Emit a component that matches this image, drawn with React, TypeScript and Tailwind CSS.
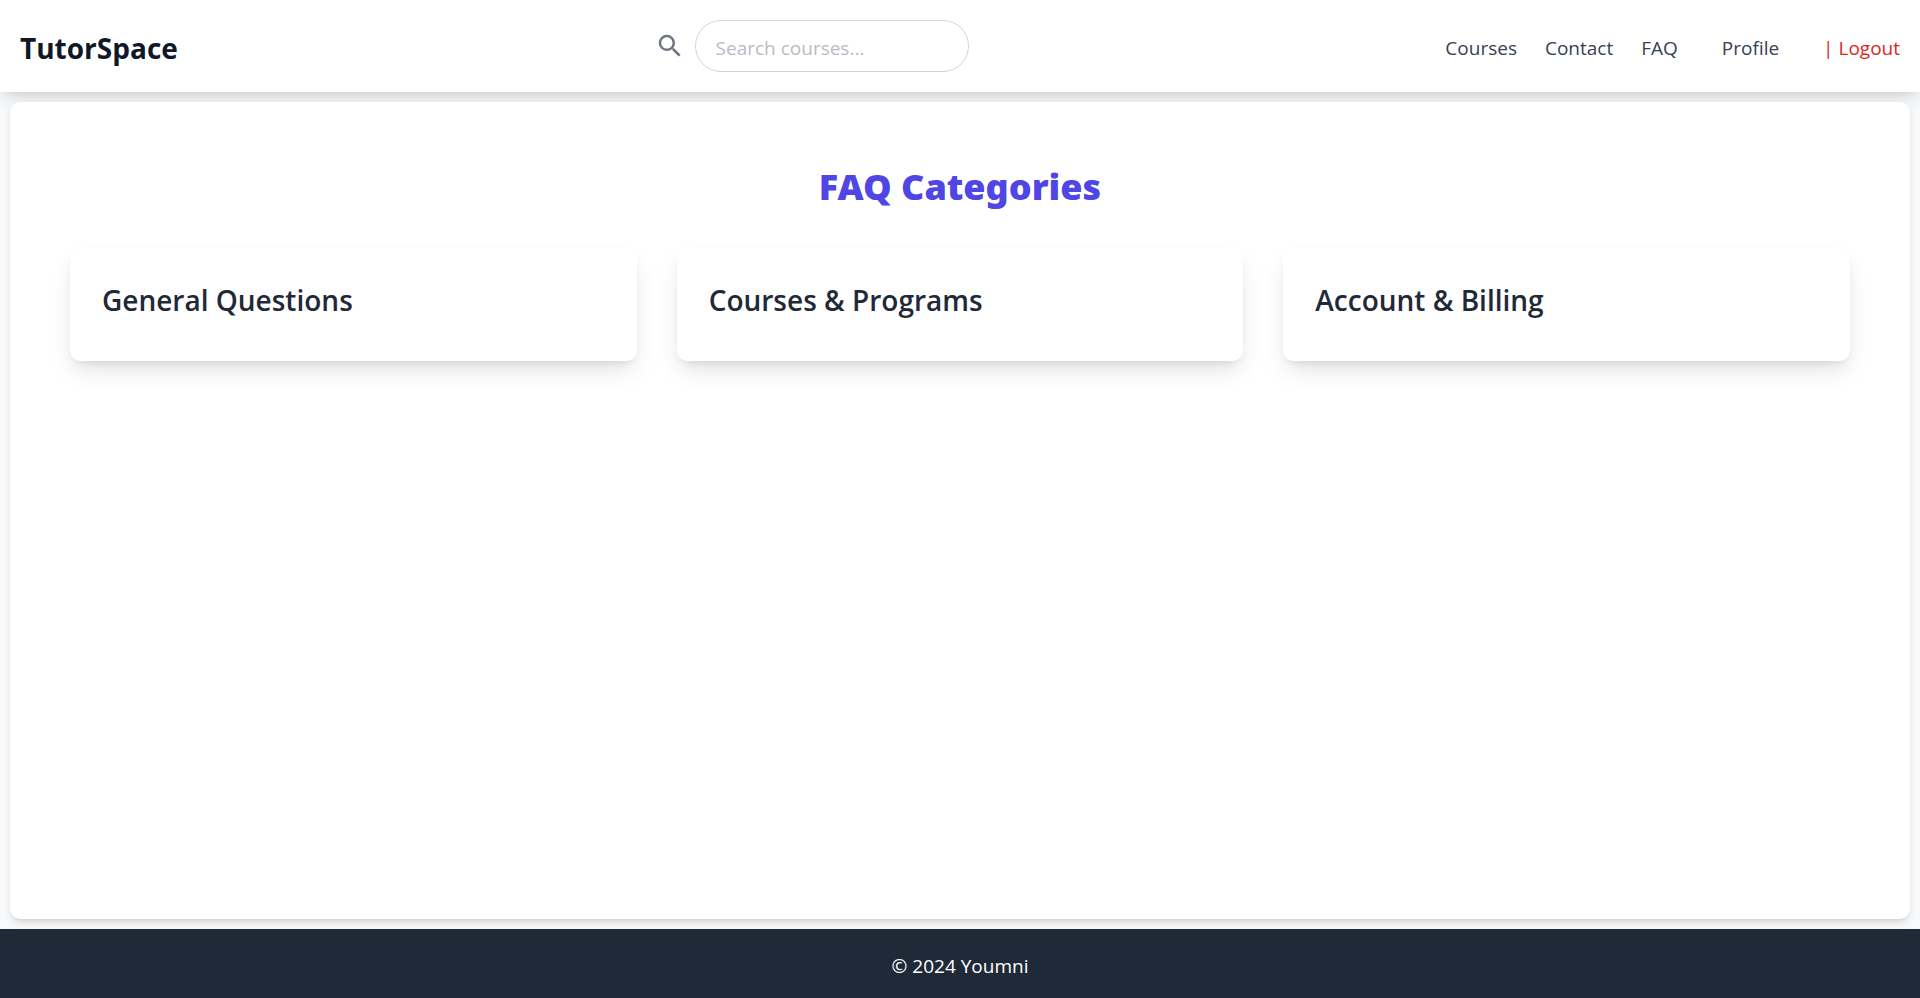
import { MdSearch } from "react-icons/md";

const categories = ["General Questions", "Courses & Programs", "Account & Billing"];

function Header() {
  return (
    <header className="flex items-center justify-between bg-white p-5 shadow-[0_12px_24px_-4px_rgb(0_0_0/0.12),0_5px_8px_-4px_rgb(0_0_0/0.1)]">
      <a href="#home" className="pt-1 text-[28px] leading-10 font-bold text-gray-900">
        TutorSpace
      </a>
      <form role="search" className="flex items-center gap-[10px]">
        <button type="button" aria-label="Search" className="text-[#6b7280]">
          <MdSearch size={30} />
        </button>
        <input
          type="search"
          aria-label="Search courses"
          placeholder="Search courses..."
          className="h-[52px] w-[274px] rounded-full border border-[#d1d5db] px-5 pt-1 placeholder:text-[#b8bcc5]"
        />
      </form>
      <nav className="flex items-center gap-11 pt-1 text-[#374151]">
        <div className="flex gap-7">
          <a href="#courses">Courses</a>
          <a href="#contact">Contact</a>
          <a href="#faq">FAQ</a>
        </div>
        <a href="#profile">Profile</a>
        <button type="button" className="text-[#dc2626]">| Logout</button>
      </nav>
    </header>
  );
}

export default function App() {
  return (
    <div className="flex min-h-screen flex-col bg-[#f9fafb] font-['Open_Sans','Noto_Sans',sans-serif] text-[19px] leading-[30px]">
      <Header />
      <main className="m-[10px] flex-1 rounded-[10px] bg-white px-[60px] py-[60px] shadow-[0_5px_8px_-1px_rgb(0_0_0/0.12),0_3px_5px_-3px_rgb(0_0_0/0.1)]">
        <h1 className="mb-9 text-center font-['Noto_Sans','Open_Sans',sans-serif] text-[36px] leading-[50px] font-black text-[#4f46e5]">
          FAQ Categories
        </h1>
        <div className="grid grid-cols-3 gap-10">
          {categories.map((name) => (
            <section
              key={name}
              className="rounded-[10px] bg-white px-8 pt-8 pb-[41px] shadow-[0_12px_24px_-4px_rgb(0_0_0/0.12),0_5px_8px_-4px_rgb(0_0_0/0.1)]"
            >
              <h2 className="text-[28px] leading-10 font-semibold text-[#1f2937]">{name}</h2>
            </section>
          ))}
        </div>
      </main>
      <footer className="bg-[#1f2937] pt-[22px] pb-[17px] text-center text-white">© 2024 Youmni</footer>
    </div>
  );
}
